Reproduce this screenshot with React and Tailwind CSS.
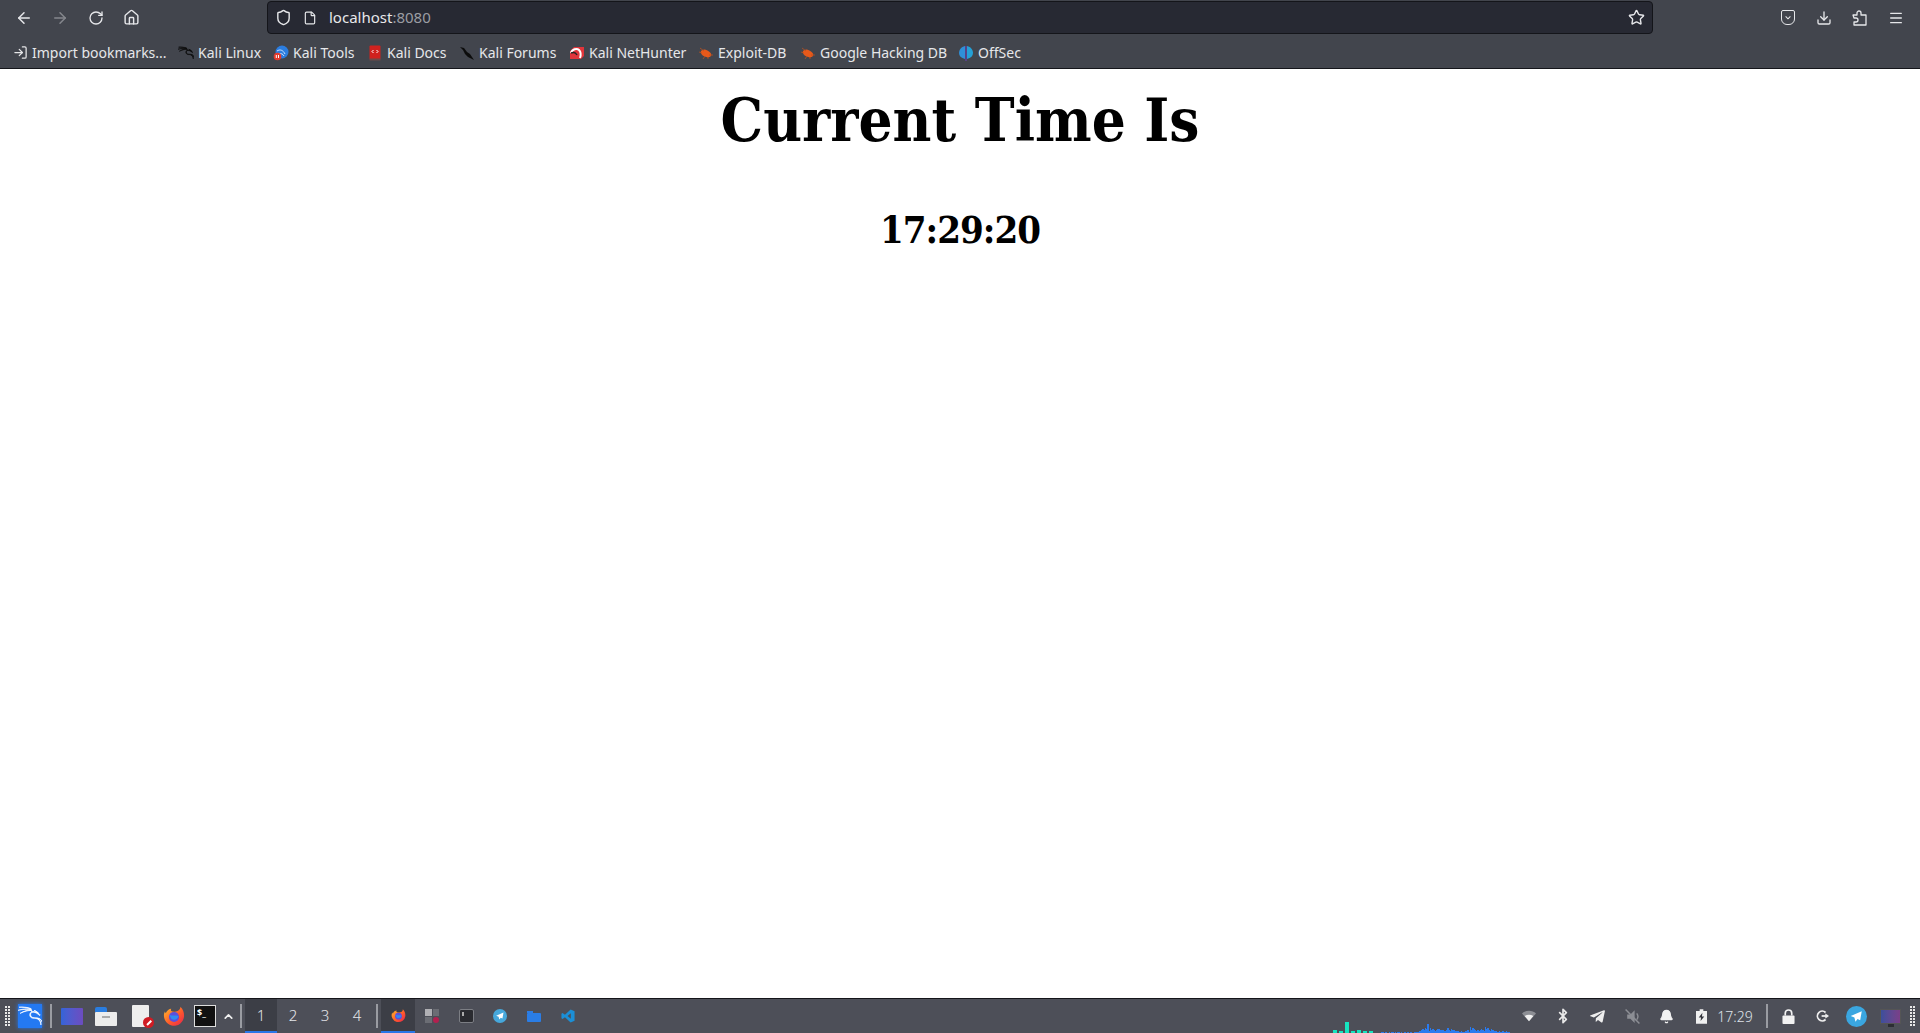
import { ArrowLeft, ArrowRight, RotateCw, Home, Shield, File, Star, Download, Menu, LogIn, ChevronUp, Bluetooth, Bell } from 'lucide-react'
import { SiKalilinux } from 'react-icons/si'
import { FaTelegramPlane } from 'react-icons/fa'

const uiFont = 'font-["Noto_Sans",sans-serif]'

function ToolsIcon() {
  return (
    <svg viewBox="0 0 16 16" className="h-4 w-4">
      <circle cx="9" cy="7" r="6.5" fill="#2b7de0" />
      <path d="M4 6c3-2 6-1 8 3M6 9c2-1 4 0 5 2" stroke="#cfe4ff" strokeWidth="1" fill="none" />
      <circle cx="4.5" cy="11.5" r="3.8" fill="#e23b2e" />
      <path d="M3.3 10v3M5.5 10v3" stroke="#fff" strokeWidth="1" />
    </svg>
  )
}

function DocsIcon() {
  return (
    <svg viewBox="0 0 16 16" className="h-4 w-4">
      <rect x="2.5" y="0.5" width="11" height="14" rx="1" fill="#d0221f" />
      <rect x="2.5" y="13.5" width="11" height="2" fill="#6d4a4a" />
      <path d="M6.5 5 5 6.5 6.5 8M9.5 5 11 6.5 9.5 8" stroke="#fff" strokeWidth="1" fill="none" />
    </svg>
  )
}

function ForumsIcon() {
  return (
    <svg viewBox="0 0 16 16" className="h-4 w-4">
      <path d="M1 2 5 3 8 7 11 9 15 15 9 12 6 9 4 5Z" fill="#0c0c0c" />
    </svg>
  )
}

function HunterIcon() {
  return (
    <svg viewBox="0 0 16 16" className="h-4 w-4">
      <path d="M5 2h10v9l-3 3H1V6Z" fill="#e0353b" />
      <path d="M2 8c1-4 6-5 8-3 2 2 2 5 1 8" stroke="#fff" strokeWidth="2" fill="none" />
      <path d="M2 8c3-1 5 0 6 2" stroke="#222" strokeWidth="1.4" fill="none" />
    </svg>
  )
}

function BugIcon() {
  return (
    <svg viewBox="0 0 16 16" className="h-4 w-4">
      <ellipse cx="8" cy="8.5" rx="5.6" ry="3.4" transform="rotate(25 8 8.5)" fill="#e8591a" />
      <path d="M2 3l4 3M1 7l3 1M5 14l2-3M15 10l-4 0M10 14l0-2" stroke="#b8521f" strokeWidth="0.8" />
    </svg>
  )
}

function OffSecIcon() {
  return (
    <svg viewBox="0 0 16 16" className="h-4 w-4">
      <path d="M7 1C3 2 1 5 1 8s2 5 6 6Z" fill="#2f8fd8" />
      <path d="M9 1c4 1 6 4 6 7s-2 5-6 6Z" fill="#25a0d6" />
      <rect x="7.5" y="1" width="1" height="15" fill="#6a3fc0" />
    </svg>
  )
}

const bookmarks = [
  { label: 'Import bookmarks...', w: 'w-[166px]', icon: <LogIn size={15} color="#e6e6e8" /> },
  { label: 'Kali Linux', w: 'w-[95px]', icon: <SiKalilinux size={18} color="#0c0c0c" stroke="#0c0c0c" strokeWidth={0.9} /> },
  { label: 'Kali Tools', w: 'w-[94px]', icon: <ToolsIcon /> },
  { label: 'Kali Docs', w: 'w-[92px]', icon: <DocsIcon /> },
  { label: 'Kali Forums', w: 'w-[110px]', icon: <ForumsIcon /> },
  { label: 'Kali NetHunter', w: 'w-[129px]', icon: <HunterIcon /> },
  { label: 'Exploit-DB', w: 'w-[102px]', icon: <BugIcon /> },
  { label: 'Google Hacking DB', w: 'w-[158px]', icon: <BugIcon /> },
  { label: 'OffSec', w: 'w-[80px]', icon: <OffSecIcon /> },
]

function Firefox({ className = 'h-[22px] w-[22px]', id = 'ff' }) {
  return (
    <svg viewBox="0 0 24 24" className={className}>
      <defs>
        <linearGradient id={id} x1="0" y1="0" x2="1" y2="1">
          <stop offset="0" stopColor="#ffc02c" />
          <stop offset="0.55" stopColor="#ff5a2b" />
          <stop offset="1" stopColor="#e5224f" />
        </linearGradient>
      </defs>
      <path d="M19 2c3 3 4 6 4 10a11 11 0 1 1-21-5l1 2c1-3 4-5 6-5-1 2 0 3 2 3 4 1 8-1 8-5Z" fill={`url(#${id})`} />
      <circle cx="12" cy="13" r="5.5" fill="#5b4fdc" />
      <path d="M7 11c3 1 7 0 10 1-1 4-5 5-8 3Z" fill="#2f8cf0" />
    </svg>
  )
}

function TerminalTile() {
  return (
    <div className="flex h-[22px] w-[22px] items-start border border-[#ddd] bg-[#111] px-[2px] text-[9px] font-bold leading-[13px] text-white">$_</div>
  )
}

function TgIcon({ size = 'h-[16px] w-[16px]', bg = '#46a8dc' }) {
  return (
    <svg viewBox="0 0 20 20" className={size}>
      <circle cx="10" cy="10" r="10" fill={bg} />
      <path d="M15 5 4.5 9.5 8 11l1 4 2-2.500 2.500 1Z" fill="#fff" />
    </svg>
  )
}

const Sep = () => <div className="h-[24px] w-[2px] bg-[#9a9ca2]" />

function Slot({ w, className = '', children }) {
  return <div className={`flex h-full shrink-0 items-center justify-center ${w} ${className}`}>{children}</div>
}

function Handle() {
  return (
    <div className="grid grid-cols-2 gap-[1px]">
      {Array.from({ length: 14 }).map((_, i) => (
        <div key={i} className="h-[2px] w-[2px] bg-[#e8e8e8]" />
      ))}
    </div>
  )
}

const teal = [3, 2, 11, 2, 3, 2, 2]
const blue = '1101101011010110101101011011112234354925343234433322353243322211211223163543232343264532432221211211211'

function Graph() {
  return (
    <div className="flex h-full items-end">
      <div className="mr-[8px] flex items-end gap-[2px]">
        {teal.map((h, i) => (
          <div key={i} className="w-[4px] bg-[#16e5c0]" style={{ height: h }} />
        ))}
      </div>
      <div className="flex w-[128px] items-end">
        {blue.split('').map((h, i) => (
          <div key={i} className="flex-1 bg-[#2a7bef]" style={{ height: Number(h) }} />
        ))}
      </div>
    </div>
  )
}

function Workspace({ n, active }) {
  return (
    <div className={`flex h-full w-[32px] items-center justify-center border-b-2 text-[15px] font-light ${active ? 'border-[#2a76e8] bg-[#3c3e46]' : 'border-transparent'} text-[#e4e6ea]`}>
      {n}
    </div>
  )
}

export default function App() {
  return (
    <div className={`flex h-[1033px] w-[1920px] flex-col overflow-hidden bg-white ${uiFont}`}>
      <header className="h-[69px] shrink-0 border-b border-[#14151a] bg-[#42454d]">
        <div className="flex h-[35px] items-center">
          <div className="flex w-[267px] items-center pl-[15px] text-[#e6e7ea]">
            <ArrowLeft size={18} className="mr-[18px]" />
            <ArrowRight size={18} className="mr-[19px] text-[#85878d]" />
            <RotateCw size={16} className="mr-[19px]" />
            <Home size={17} />
          </div>
          <div className="flex h-[33px] w-[1386px] items-center rounded-[4px] border border-[#14151a] bg-[#272933] pl-[7px] pr-[7px]">
            <Shield size={17} color="#e6e7ea" />
            <File size={14} color="#e6e7ea" className="ml-[11px]" />
            <span className="ml-[12px] text-[15px] text-[#e8e8ea]">localhost<span className="text-[#9b9da3]">:8080</span></span>
            <Star size={17} color="#e6e7ea" className="ml-auto" />
          </div>
          <div className="flex flex-1 items-center text-[#e6e7ea]">
            <div className="ml-[128px] flex h-[15px] w-[14px] items-center justify-center rounded-b-[6px] rounded-t-[2px] border-[1.5px] border-[#e6e7ea]">
              <svg viewBox="0 0 10 10" className="h-[8px] w-[8px]" fill="none" stroke="#e6e7ea" strokeWidth="1.4"><path d="M2 3l3 3 3-3" /></svg>
            </div>
            <Download size={16} className="ml-[21px]" />
            <svg viewBox="0 0 16 16" className="ml-[20px] h-[16px] w-[16px]" fill="none" stroke="#e6e7ea" strokeWidth="1.3" strokeLinejoin="round">
              <path d="M1 5h4V3a2 2 0 0 1 4 0v2h5v10H2v-3h2a2 2 0 0 0 0-4H2Z" />
            </svg>
            <Menu size={16} className="ml-[20px]" />
          </div>
        </div>
        <div className="flex h-[33px] items-center pl-[12px] pt-[2px] text-[14px] text-[#e6e7ea]">
          {bookmarks.map(b => (
            <div key={b.label} className={`flex shrink-0 items-center gap-[4px] whitespace-nowrap ${b.w}`}>
              <span className="flex w-[16px] shrink-0 justify-center">{b.icon}</span>
              {b.label}
            </div>
          ))}
        </div>
      </header>

      <main className={`flex-1 text-center text-black font-["DejaVu_Serif_Condensed","DejaVu_Serif",serif]`}>
        <h1 className="mt-[14px] text-[59.5px] font-bold leading-[75px]">Current Time Is</h1>
        <h2 className="mt-[47px] text-[38px] font-bold leading-[50px] tracking-[-1px]">17:29:20</h2>
      </main>

      <footer className="flex h-[35px] shrink-0 border-t border-[#14151a] bg-[#4d4f58]">
        <Slot w="w-[13px]" className="pl-[2px]"><Handle /></Slot>
        <Slot w="w-[34px]">
          <div className="flex h-[24px] w-[24px] items-center justify-center overflow-hidden bg-[#2479f2] shadow-[0_0_4px_#2479f2]">
            <SiKalilinux size={26} color="#ffffff" stroke="#ffffff" strokeWidth={0.7} />
          </div>
        </Slot>
        <Slot w="w-[8px]"><Sep /></Slot>
        <Slot w="w-[34px]"><div className="h-[17px] w-[22px] rounded-[1px] bg-gradient-to-r from-[#3264d8] to-[#6c4cc0]" /></Slot>
        <Slot w="w-[34px]">
          <div className="flex h-[19px] w-[22px] flex-col">
            <div className="h-[5px] w-[12px] rounded-t-[2px] bg-[#2a7de0]" />
            <div className="flex flex-1 items-start justify-center rounded-[1px] bg-[#ececec] pt-[4px]"><div className="h-[2px] w-[8px] bg-[#aaa]" /></div>
          </div>
        </Slot>
        <Slot w="w-[35px]">
          <div className="relative h-[22px] w-[17px] rounded-[1px] bg-[#eeeeee]">
            <div className="absolute -bottom-[1px] -right-[5px] flex h-[11px] w-[11px] items-center justify-center rounded-full bg-[#d01c24]">
              <div className="h-[1.5px] w-[6px] -rotate-45 bg-white" />
            </div>
          </div>
        </Slot>
        <Slot w="w-[32px]"><Firefox /></Slot>
        <Slot w="w-[30px]"><TerminalTile /></Slot>
        <Slot w="w-[16px]"><ChevronUp size={13} color="#f0f0f0" strokeWidth={3} /></Slot>
        <Slot w="w-[9px]"><Sep /></Slot>
        <Workspace n="1" active />
        <Workspace n="2" />
        <Workspace n="3" />
        <Workspace n="4" />
        <Slot w="w-[8px]"><Sep /></Slot>
        <Slot w="w-[34px]" className="border-b-2 border-[#2a76e8] bg-[#3c3e46]"><Firefox id="ff2" className="h-[15px] w-[15px]" /></Slot>
        <Slot w="w-[34px]">
          <div className="relative grid h-[14px] w-[14px] grid-cols-2 gap-[1px]">
            <div className="bg-[#b0b0b4]" /><div className="bg-[#6b6d74]" /><div className="bg-[#6b6d74]" /><div className="rounded-full bg-[#b3204f]" />
          </div>
        </Slot>
        <Slot w="w-[34px]">
          <div className="h-[14px] w-[15px] rounded-[2px] border border-[#7c7e84] bg-[#2a2b30] pl-[2px] pt-[2px]"><div className="h-[4px] w-[2px] bg-[#aaa]" /></div>
        </Slot>
        <Slot w="w-[34px]"><TgIcon size="h-[14px] w-[14px]" /></Slot>
        <Slot w="w-[34px]">
          <div className="flex h-[11px] w-[14px] flex-col">
            <div className="h-[2px] w-[6px] bg-[#2a7de6]" />
            <div className="flex-1 rounded-[1px] bg-[#2a7de6]" />
          </div>
        </Slot>
        <Slot w="w-[34px]">
          <svg viewBox="0 0 16 16" className="h-[14px] w-[14px]">
            <path d="M11 0.500 15.500 2.500V13.500L11 15.500 4.500 9.500 1.800 11.500 0.500 10.700V5.300L1.800 4.500 4.500 6.500Z" fill="#1b8fd6" />
            <path d="M11.200 4.800 7.500 8 11.200 11.200Z" fill="#4d4f58" />
          </svg>
        </Slot>

        <div className="flex-1" />
        <Graph />
        <div className="w-[3px]" />

        <Slot w="w-[34px]">
          <svg viewBox="0 0 16 12" className="h-[12px] w-[14px]"><path d="M0 3c4-4 12-4 16 0L8 12Z" fill="#8c8e94" /><path d="M3 6c3-2 7-2 10 0L8 12Z" fill="#f0f0f0" /></svg>
        </Slot>
        <Slot w="w-[34px]"><Bluetooth size={16} color="#e8e8e8" strokeWidth={2.5} /></Slot>
        <Slot w="w-[35px]"><FaTelegramPlane size={17} color="#eeeeee" /></Slot>
        <Slot w="w-[34px]">
          <svg viewBox="0 0 16 16" className="h-[17px] w-[17px]">
            <path d="M3 6h3l4-4v12l-4-4H3Z" fill="#8c8e94" />
            <path d="M12 5c1.500 2 1.500 4 0 6" stroke="#8c8e94" strokeWidth="1.3" fill="none" />
            <path d="M1.500 1.500l13 13" stroke="#8c8e94" strokeWidth="1.4" />
          </svg>
        </Slot>
        <Slot w="w-[35px]"><Bell size={15} color="#f2f2f2" fill="#f2f2f2" /></Slot>
        <Slot w="w-[34px]">
          <svg viewBox="0 0 12 16" className="h-[15px] w-[11px]">
            <path d="M4 0h4v2h4v14H0V2h4Z" fill="#f0f0f0" />
            <path d="M7 4 3 9h2.500L5 13l4-5H6.500Z" fill="#33353c" />
          </svg>
        </Slot>
        <Slot w="w-[34px]"><span className="text-[14px] font-light text-[#dfe3ea]">17:29</span></Slot>
        <Slot w="w-[19px]" className="pl-[11px]"><Sep /></Slot>
        <Slot w="w-[34px]">
          <svg viewBox="0 0 14 16" className="h-[15px] w-[13px]">
            <rect x="0.500" y="7" width="13" height="9" rx="1" fill="#f2f2f2" />
            <path d="M3.500 7V4.500a3.500 3.500 0 0 1 7 0V7" stroke="#f2f2f2" strokeWidth="1.8" fill="none" />
          </svg>
        </Slot>
        <Slot w="w-[34px]">
          <svg viewBox="0 0 16 16" className="h-[14px] w-[15px]" fill="none" stroke="#eeeeee" strokeWidth="2">
            <path d="M11.500 4A5.500 5.500 0 1 0 11.500 12" />
            <path d="M7 8h7" />
            <path d="M11.500 5.500 15 8l-3.500 2.500Z" fill="#eeeeee" strokeWidth="0.500" />
          </svg>
        </Slot>
        <Slot w="w-[34px]"><TgIcon size="h-[21px] w-[21px]" bg="#3aa6e0" /></Slot>
        <Slot w="w-[34px]">
          <div className="relative h-[15px] w-[21px] border border-[#555] bg-gradient-to-r from-[#3b4f9c] to-[#7a3f88]">
            <div className="absolute -bottom-[4px] left-[7px] h-[3px] w-[6px] bg-[#2c2d33]" />
          </div>
        </Slot>
        <Slot w="w-[13px]" className="pr-[2px]"><Handle /></Slot>
      </footer>
    </div>
  )
}
